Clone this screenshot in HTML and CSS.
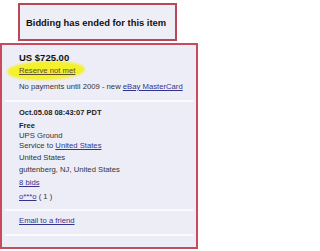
FILE: index.html
```html
<!DOCTYPE html>
<html>
<head>
<meta charset="utf-8">
<link rel="stylesheet" href="styles.css">
</head>
<body>
<div class="notice">Bidding has ended for this item</div>
<div class="panel">
  <div class="highlight"></div>
  <div class="price">US $725.00</div>
  <div class="row reserve"><a class="link reserve-link" href="#">Reserve not met</a></div>
  <div class="row promo">No payments until 2009 - new <a class="link" href="#">eBay MasterCard</a></div>
  <div class="sep sep1"></div>
  <div class="row strong date">Oct.05.08 08:43:07 PDT</div>
  <div class="row strong free">Free</div>
  <div class="row">UPS Ground</div>
  <div class="row">Service to <a class="link" href="#">United States</a></div>
  <div class="row loc">United States</div>
  <div class="row seller-loc">guttenberg, NJ, United States</div>
  <div class="row bids"><a class="link" href="#">8 bids</a></div>
  <div class="row bidder"><a class="link" href="#">o***o</a> ( 1 )</div>
  <div class="sep sep2"></div>
  <div class="row email"><a class="link" href="#">Email to a friend</a></div>
  <div class="sep sep3"></div>
</div>
</body>
</html>
```
FILE: styles.css
```css
html, body {
  margin: 0;
  padding: 0;
  background: #ffffff;
}
body {
  width: 200px;
  height: 251px;
  overflow: hidden;
  font-family: "Liberation Sans", Arial, sans-serif;
  color: #333333;
}
.notice {
  box-sizing: border-box;
  margin: 3px 0 0 18px;
  width: 159px;
  height: 38px;
  border: 2px solid #b9475a;
  background: #eeeef7;
  display: flex;
  align-items: center;
  padding-left: 6px;
  font-size: 9.4px;
  font-weight: bold;
  color: #111111;
}
.panel {
  position: relative;
  box-sizing: border-box;
  margin-top: 2px;
  width: 198px;
  height: 206px;
  border: 2px solid #c84a5c;
  background: #ededf8;
  padding: 7px 4px 0 17px;
}
.highlight {
  position: absolute;
  left: 5px;
  top: 16px;
  width: 78px;
  height: 19px;
  border-radius: 50%;
  background: #f4f02a;
  filter: blur(1px);
  transform: rotate(-2deg);
}
.price {
  position: relative;
  font-size: 9.5px;
  line-height: 12px;
  font-weight: bold;
  color: #111111;
}
.row {
  position: relative;
  font-size: 7.7px;
  line-height: 10px;
  white-space: nowrap;
}
.strong {
  font-weight: bold;
  font-size: 7.5px;
  color: #222222;
}
.link {
  color: #34348c;
  text-decoration: underline;
}
.reserve { margin-top: 2px; }
.reserve-link { color: #5e4a2c; }
.promo { margin-top: 6px; }
.sep {
  height: 2px;
  background: #fbfbff;
  margin: 0 -1px 0 -14px;
}
.sep1 { margin-top: 8px; }
.date { margin-top: 6px; }
.free { margin-top: 3px; }
.loc { margin-top: 2px; }
.seller-loc { margin-top: 2px; }
.bids { margin-top: 3px; }
.bidder { margin-top: 4px; }
.sep2 { margin-top: 7px; }
.email { margin-top: 5px; }
.sep3 { margin-top: 8px; }
```
